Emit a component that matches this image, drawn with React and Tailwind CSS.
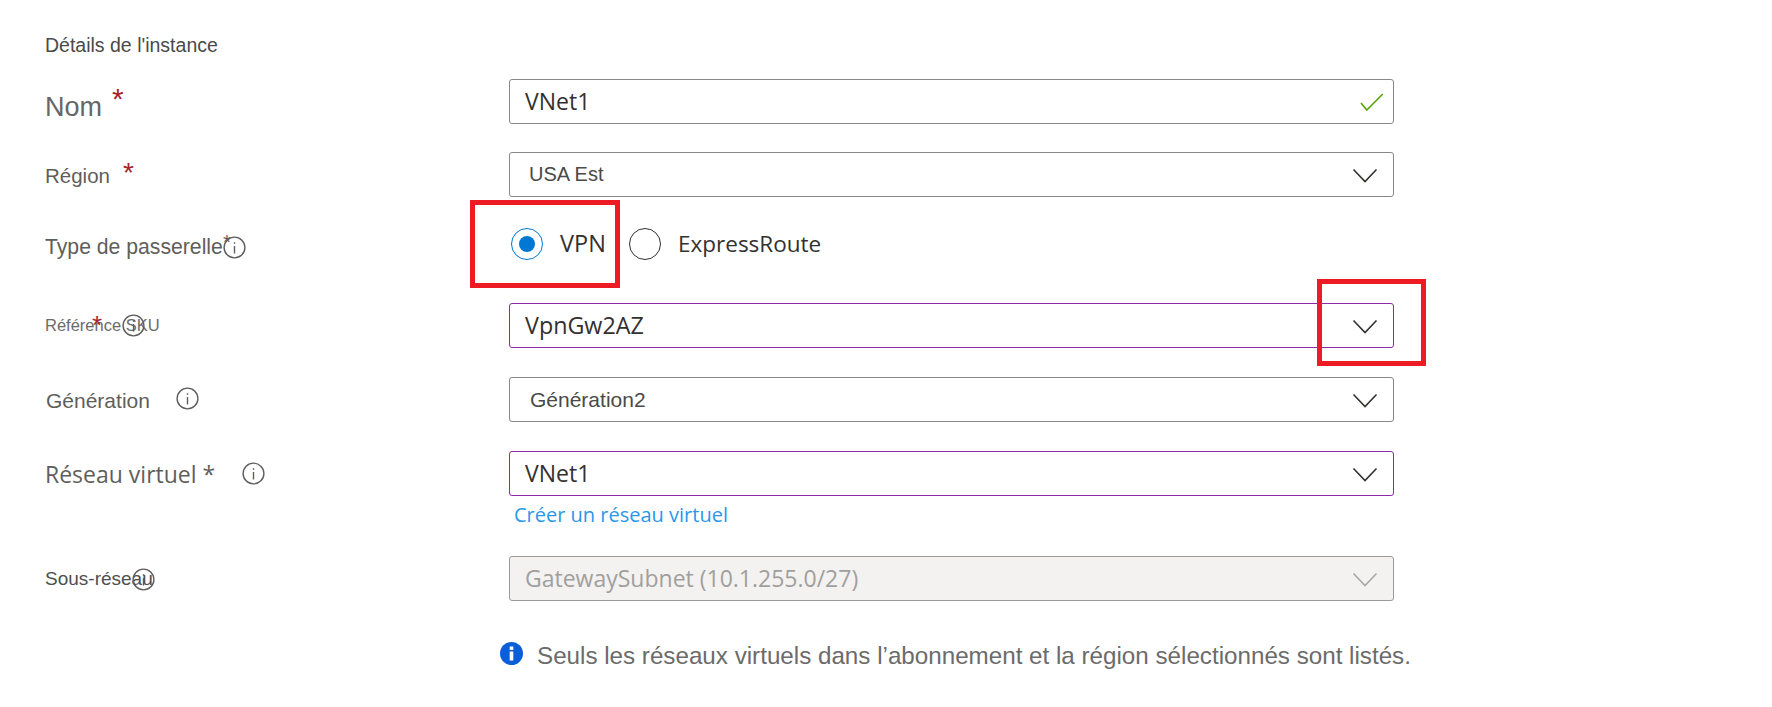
import React from "react";

const Chevron = ({ muted }) => (
  <svg width="26" height="15" viewBox="0 0 26 15" fill="none" className={`absolute right-[15px] top-[15px] ${muted ? "text-[#a8a8a8]" : "text-[#323130]"}`}>
    <path d="M1.5 1.5L13 13.5L24.5 1.5" stroke="currentColor" strokeWidth="1.6" />
  </svg>
);

const Info = ({ className = "" }) => (
  <svg width="23" height="23" viewBox="0 0 23 23" fill="none" className={className}>
    <circle cx="11.5" cy="11.5" r="10.4" stroke="#605e5c" strokeWidth="1.4" />
    <rect x="10.8" y="10" width="1.4" height="7.5" fill="#605e5c" />
    <rect x="10.8" y="6.2" width="1.4" height="1.6" fill="#605e5c" />
  </svg>
);

const Star = ({ className = "" }) => (
  <span className={`font-['Liberation_Sans',sans-serif] ${className}`}>*</span>
);

const Field = ({ children, border = "border-[#8a8886]", bg = "bg-white" }) => (
  <div className={`relative h-[45px] w-[885px] rounded-[3px] border ${border} ${bg} flex items-center`}>{children}</div>
);

const open = "font-['Open_Sans',sans-serif]";
const arial = "font-['Liberation_Sans',sans-serif]";

export default function App() {
  return (
    <div className={`relative h-[707px] w-[1772px] overflow-hidden bg-white ${arial} text-[#605e5c]`}>
      <div className="flex flex-col pl-[45px]">
        <h2 className="mt-[35px] h-[20px] text-[19.5px] leading-[20px] text-[#4a4a4a]">Détails de l'instance</h2>

        <div className="mt-[24px] flex h-[45px]">
          <div className="relative w-[464px] pt-[11px] text-[27px] leading-[34px] text-[#666]">
            Nom<Star className="absolute left-[67px] top-[3px] text-[30px] leading-[34px] text-[#a4262c]" />
          </div>
          <Field>
            <span className={`pl-[15px] text-[23px] text-[#323130] ${open}`}>VNet1</span>
            <svg width="24" height="18" viewBox="0 0 24 18" fill="none" className="absolute right-[9px] top-[13px]">
              <path d="M1 10L6.8 17L22.8 1" stroke="#57a300" strokeWidth="1.6" />
            </svg>
          </Field>
        </div>

        <div className="mt-[28px] flex h-[45px]">
          <div className="relative w-[464px] pt-[11px] text-[20.5px] leading-[26px] text-[#605e5c]">
            Région<Star className="absolute left-[78px] top-[6px] text-[28px] leading-[30px] text-[#a4262c]" />
          </div>
          <Field>
            <span className="pl-[19px] -mt-[1px] text-[20px] text-[#4a4a4a]">USA Est</span>
            <Chevron />
          </Field>
        </div>

        <div className="mt-[28px] flex h-[78px]">
          <div className="relative w-[464px] pt-[9px] text-[21.2px] leading-[26px]">
            Type de passerelle
            <Star className="absolute left-[178px] top-[4px] text-[20px] leading-[26px]" />
            <Info className="absolute left-[178px] top-[11px]" />
          </div>
          <div className={`flex items-center self-start h-[34px] pt-[3px] text-[22.5px] text-[#323130] ${open}`}>
            <span className="ml-[2px] flex h-[32px] w-[32px] items-center justify-center rounded-full border border-[#0078d4]">
              <span className="h-[16px] w-[16px] rounded-full bg-[#0078d4]" />
            </span>
            <span className="ml-[17px] w-[69px] text-[23.5px]">VPN</span>
            <span className="h-[32px] w-[32px] rounded-full border border-[#323130]" />
            <span className="ml-[17px]">ExpressRoute</span>
          </div>
        </div>

        <div className="flex h-[45px]">
          <div className="relative w-[464px] pt-[11px] text-[16.5px] leading-[22px] text-[#6b6b6b]">
            Référence SKU
            <Star className="absolute left-[47px] top-[7px] text-[26px] leading-[30px] text-[#a4262c]" />
            <Info className="absolute left-[77px] top-[11px]" />
          </div>
          <Field border="border-[#8e2aa8]">
            <span className={`pl-[15px] text-[23.3px] text-[#323130] ${open}`}>VpnGw2AZ</span>
            <Chevron />
          </Field>
        </div>

        <div className="mt-[29px] flex h-[45px]">
          <div className="flex w-[464px] pt-[11px] text-[21px] leading-[26px]">
            <span className="pl-[1px]">Génération</span>
            <Info className="ml-[26px] -mt-[1px]" />
          </div>
          <Field>
            <span className="pl-[20px] text-[21px] text-[#4a4a4a]">Génération2</span>
            <Chevron />
          </Field>
        </div>

        <div className="mt-[29px] flex h-[45px]">
          <div className={`flex w-[464px] pt-[7px] text-[23px] leading-[32px] text-[#605e5c] ${open}`}>
            <span>Réseau virtuel *</span>
            <Info className="ml-[27px] mt-[4px]" />
          </div>
          <Field border="border-[#8e2aa8]">
            <span className={`pl-[15px] text-[23px] text-[#323130] ${open}`}>VNet1</span>
            <Chevron />
          </Field>
        </div>

        <a className={`ml-[469px] mt-[4px] h-[30px] text-[20px] leading-[30px] text-[#2b97ea] ${open}`}>Créer un réseau virtuel</a>

        <div className="mt-[26px] flex h-[45px]">
          <div className="relative w-[464px] pt-[11px] text-[19px] leading-[24px] text-[#4f4f4f]">
            Sous-réseau
            <Info className="absolute left-[87px] top-[12px]" />
          </div>
          <Field border="border-[#9a9a9a]" bg="bg-[#f3f2f1]">
            <span className={`pl-[15px] text-[23px] text-[#a19f9d] ${open}`}>GatewaySubnet (10.1.255.0/27)</span>
            <Chevron muted />
          </Field>
        </div>

        <div className="mt-[40px] ml-[455px] flex items-start">
          <svg width="23" height="23" viewBox="0 0 23 23" className="mt-[1px]">
            <circle cx="11.5" cy="11.5" r="11.5" fill="#0a5fd8" />
            <rect x="9.7" y="9.5" width="3.6" height="9" fill="#fff" />
            <rect x="9.7" y="4.5" width="3.6" height="3.4" fill="#fff" />
          </svg>
          <p className="ml-[14px] text-[24.2px] leading-[30px] text-[#6b6b6b]">Seuls les réseaux virtuels dans l’abonnement et la région sélectionnés sont listés.</p>
        </div>
      </div>

      <div className="absolute left-[470px] top-[200px] h-[88px] w-[150px] border-[5px] border-[#ed1c24]" />
      <div className="absolute left-[1317px] top-[279px] h-[87px] w-[109px] border-[5px] border-[#ed1c24]" />
    </div>
  );
}
